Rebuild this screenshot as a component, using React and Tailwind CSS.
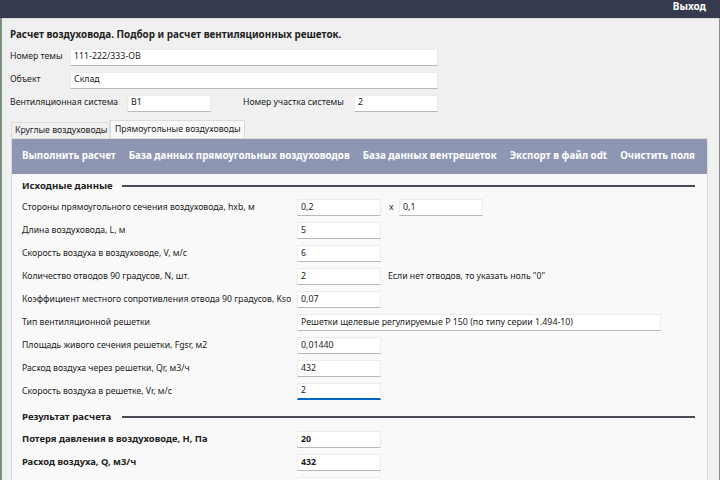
import React from 'react';

const font = { fontFamily: '"Noto Sans", "Open Sans", sans-serif' };

function Field({ value, w = 'w-[84px]', bold, focus }) {
  return (
    <div
      className={`${w} h-[17px] shrink-0 bg-white flex items-center pl-[3px] whitespace-nowrap overflow-hidden text-[8.8px] text-[#1a1a1a] border border-[#ececec] ${
        focus ? 'border-b-2 border-b-[#0067c0]' : 'border-b-[#b8b8b8]'
      } ${bold ? 'font-bold' : ''}`}
    >
      {value}
    </div>
  );
}

function Row({ label, value, bold, focus, wide, children }) {
  return (
    <div className="flex items-center h-[17px]">
      <div className={`w-[275px] shrink-0 whitespace-nowrap text-[#222] ${bold ? 'font-bold text-[9.4px]' : 'text-[8.7px]'}`}>{label}</div>
      <Field value={value} bold={bold} focus={focus} w={wide ? 'w-[364px]' : 'w-[84px]'} />
      {children}
    </div>
  );
}

function Section({ title }) {
  return (
    <div className="flex items-center h-[14px]">
      <div className="w-[100px] shrink-0 whitespace-nowrap text-[9.6px] font-bold text-[#222]">{title}</div>
      <div className="flex-1 h-[2px] bg-[#4a4a55] mr-[12px]" />
    </div>
  );
}

export default function App() {
  const tools = ['Выполнить расчет', 'База данных прямоугольных воздуховодов', 'База данных вентрешеток', 'Экспорт в файл odt', 'Очистить поля'];

  return (
    <div className="w-[720px] h-[480px] overflow-hidden bg-[#f0f0f0] flex flex-col" style={font}>
      <div className="h-[18px] bg-[#363a4e] flex justify-end pr-[14px] overflow-hidden shrink-0">
        <span className="text-white font-bold text-[10px] leading-[12px]">Выход</span>
      </div>
      <div className="flex-1 flex min-h-0">
        <div className="w-[2px] bg-[#7c917c]" />
        <div className="flex-1 flex flex-col pl-[8px] pt-[8px] pr-[11px] border-t border-[#d8d8d8] border-r-[1px] border-r-[#8a8a8a]">
          <div className="text-[9.9px] font-bold text-[#222] leading-[14px] whitespace-nowrap">
            Расчет воздуховода. Подбор и расчет вентиляционных решеток.
          </div>

          <div className="flex items-center h-[16px] mt-[8px]">
            <div className="w-[60px] shrink-0 whitespace-nowrap text-[8.7px] text-[#222]">Номер темы</div>
            <Field value="111-222/333-ОВ" w="w-[368px]" />
          </div>
          <div className="flex items-center h-[16px] mt-[7px]">
            <div className="w-[60px] shrink-0 whitespace-nowrap text-[8.7px] text-[#222]">Объект</div>
            <Field value="Склад" w="w-[368px]" />
          </div>
          <div className="flex items-center h-[16px] mt-[7px]">
            <div className="w-[117px] shrink-0 whitespace-nowrap text-[8.7px] text-[#222]">Вентиляционная система</div>
            <Field value="В1" w="w-[84px]" />
            <div className="w-[111px] shrink-0 ml-[32px] whitespace-nowrap text-[8.7px] text-[#222]">Номер участка системы</div>
            <Field value="2" w="w-[84px]" />
          </div>

          <div className="flex items-end mt-[9px] ml-[1px] h-[18px]">
            <div className="h-[16px] px-[3px] flex items-center whitespace-nowrap text-[8.7px] text-[#222] border border-b-0 border-[#dcdcdc] bg-[#f0f0f0] w-[99px]">
              Круглые воздуховоды
            </div>
            <div className="h-[18px] px-[4px] flex items-center whitespace-nowrap text-[8.7px] text-[#222] border border-b-0 border-[#dcdcdc] bg-[#f9f9f9] w-[135px]">
              Прямоугольные воздуховоды
            </div>
          </div>

          <div className="flex-1 ml-[1px] border border-[#dcdcdc] bg-[#f9f9f9] flex flex-col">
            <div className="h-[35px] shrink-0 bg-[#8e96b4] flex items-center pl-[10px] gap-[13px] text-white font-bold text-[9.8px] whitespace-nowrap">
              {tools.map(t => <span key={t}>{t}</span>)}
            </div>

            <div className="flex flex-col pl-[10px] pt-[5px]">
              <Section title="Исходные данные" />
              <div className="flex flex-col gap-[6px] mt-[6px]">
                <Row label="Стороны прямоугольного сечения воздуховода, hxb, м" value="0,2">
                  <span className="ml-[8px] w-[10px] text-[8.7px] text-[#222]">x</span>
                  <Field value="0,1" />
                </Row>
                <Row label="Длина воздуховода, L, м" value="5" />
                <Row label="Скорость воздуха в воздуховоде, V, м/с" value="6" />
                <Row label="Количество отводов 90 градусов, N, шт." value="2">
                  <span className="ml-[7px] whitespace-nowrap text-[8.7px] text-[#222]">Если нет отводов, то указать ноль "0"</span>
                </Row>
                <Row label="Коэффициент местного сопротивления отвода 90 градусов, Kso" value="0,07" />
                <Row label="Тип вентиляционной решетки" value="Решетки щелевые регулируемые Р 150 (по типу серии 1.494-10)" wide />
                <Row label="Площадь живого сечения решетки, Fgsr, м2" value="0,01440" />
                <Row label="Расход воздуха через решетки, Qr, м3/ч" value="432" />
                <Row label="Скорость воздуха в решетке, Vr, м/с" value="2" focus />
              </div>
              <div className="mt-[10px]">
                <Section title="Результат расчета" />
              </div>
              <div className="flex flex-col gap-[6px] mt-[7px]">
                <Row label="Потеря давления в воздуховоде, H, Па" value="20" bold />
                <Row label="Расход воздуха, Q, м3/ч" value="432" bold />
                <Row label="" value="" bold />
              </div>
            </div>
          </div>
        </div>
      </div>
    </div>
  );
}
